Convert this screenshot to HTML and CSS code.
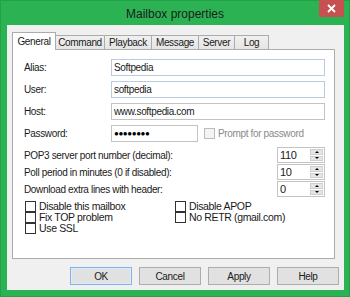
FILE: index.html
```html
<!DOCTYPE html>
<html lang="en">
<head>
    <meta charset="UTF-8">
    <title>Mailbox properties</title>
    <link rel="stylesheet" href="styles.css">
</head>
<body>
    <!-- 대화상자 창 -->
    <div class="win">
        <!-- 1. 타이틀바 -->
        <div class="tbar">
            <span></span>
            <h1 class="ttl">Mailbox properties</h1>
            <a href="" class="xbtn">
                <svg width="9" height="9" viewBox="0 0 9 9">
                    <path d="M1 1L8 8M8 1L1 8" stroke="#fff" stroke-width="1.8"/>
                </svg>
            </a>
        </div>

        <!-- 2. 본문 -->
        <div class="cont">
            <!-- 탭 -->
            <ul class="tabs">
                <li class="on">General</li>
                <li>Command</li>
                <li>Playback</li>
                <li>Message</li>
                <li>Server</li>
                <li>Log</li>
            </ul>

            <!-- 탭 패널 -->
            <div class="panel">
                <div class="row">
                    <label class="lb">Alias:</label>
                    <div class="inp blu">Softpedia</div>
                </div>
                <div class="row">
                    <label class="lb">User:</label>
                    <div class="inp blu">softpedia</div>
                </div>
                <div class="row">
                    <label class="lb">Host:</label>
                    <div class="inp">www.softpedia.com</div>
                </div>
                <div class="row">
                    <label class="lb">Password:</label>
                    <div class="inp pw">●●●●●●●●</div>
                    <span class="chk dis"></span>
                    <span class="gry">Prompt for password</span>
                </div>

                <div class="srow first">
                    <label>POP3 server port number (decimal):</label>
                    <div class="spin"><span class="val">110</span><span class="arr"><i class="up"></i><i class="dn"></i></span></div>
                </div>
                <div class="srow">
                    <label>Poll period in minutes (0 if disabled):</label>
                    <div class="spin"><span class="val">10</span><span class="arr"><i class="up"></i><i class="dn"></i></span></div>
                </div>
                <div class="srow">
                    <label>Download extra lines with header:</label>
                    <div class="spin"><span class="val">0</span><span class="arr"><i class="up"></i><i class="dn"></i></span></div>
                </div>

                <!-- 체크박스 -->
                <div class="opts">
                    <div class="opt"><span class="chk"></span>Disable this mailbox</div>
                    <div class="opt"><span class="chk"></span>Disable APOP</div>
                    <div class="opt"><span class="chk"></span>Fix TOP problem</div>
                    <div class="opt"><span class="chk"></span>No RETR (gmail.com)</div>
                    <div class="opt"><span class="chk"></span>Use SSL</div>
                </div>
            </div>

            <!-- 하단 버튼 -->
            <div class="btns">
                <button class="btn def">OK</button>
                <button class="btn">Cancel</button>
                <button class="btn">Apply</button>
                <button class="btn">Help</button>
            </div>
        </div>
    </div>
</body>
</html>
```

FILE: styles.css
```css
html,
body {
    margin: 0;
    padding: 0;
}

body {
    font-family: "Liberation Sans", Arial, sans-serif;
    font-size: 10px;
    letter-spacing: -0.35px;
    color: #1a1a1a;
}

/* 창 */
.win {
    width: 350px;
    height: 297px;
    box-sizing: border-box;
    background: #2bb353;
    border: 1px solid #24a048;
    display: flex;
    flex-direction: column;
}

/* 1. 타이틀바 */
.tbar {
    height: 24px;
    display: grid;
    grid-template-columns: 1fr auto 1fr;
    align-items: start;
}

.ttl {
    margin: 6px 0 0;
    font-size: 12px;
    font-weight: normal;
    letter-spacing: 0;
    color: #1c1c1c;
}

.xbtn {
    justify-self: end;
    margin-right: 5px;
    margin-top: -1px;
    width: 25px;
    height: 17px;
    background: #c75050;
    display: flex;
    align-items: center;
    justify-content: center;
}

/* 2. 본문 */
.cont {
    flex: 1;
    margin: 0 5px 6px 6px;
    background: #f0f0f0;
    padding: 7px 7px 0 5px;
    display: flex;
    flex-direction: column;
}

/* 탭 */
.tabs {
    list-style: none;
    margin: 0;
    padding: 0;
    display: flex;
    align-items: flex-end;
    height: 17px;
    position: relative;
    z-index: 1;
}

.tabs li {
    height: 14px;
    line-height: 14px;
    box-sizing: border-box;
    border: 1px solid #acacac;
    border-bottom: 0;
    margin-left: -1px;
    background: linear-gradient(#f0f0f0, #e5e5e5);
    text-align: center;
}

.tabs li:nth-child(1) { width: 44px; margin-left: 0; }
.tabs li:nth-child(2) { width: 50px; }
.tabs li:nth-child(3) { width: 48px; }
.tabs li:nth-child(4) { width: 48px; }
.tabs li:nth-child(5) { width: 37px; }
.tabs li:nth-child(6) { width: 35px; }

.tabs li.on {
    line-height: 17px;
    background: #fff;
    margin-bottom: -1px;
    height: 18px;
}

.panel {
    width: 323px;
    height: 210px;
    box-sizing: border-box;
    background: #fff;
    border: 1px solid #acacac;
    padding: 9px 9px 0 11px;
}

/* 입력 줄 */
.row {
    display: flex;
    align-items: center;
    height: 17px;
    margin-bottom: 5px;
}

.lb {
    width: 87px;
}

.inp {
    flex: 1;
    height: 17px;
    box-sizing: border-box;
    border: 1px solid #c3c3c3;
    padding-left: 2px;
    line-height: 15px;
}

.inp.blu {
    border-color: #b9cbe3;
}

.inp.pw {
    flex: none;
    width: 87px;
    font-size: 8px;
    letter-spacing: -0.4px;
    padding-left: 2px;
    color: #000;
}

.gry {
    color: #8a8a8a;
    margin-left: 3px;
}

/* 체크박스 */
.chk {
    display: inline-block;
    width: 9px;
    height: 9px;
    border: 1px solid #333;
    background: #fff;
    flex: none;
}

.chk.dis {
    border-color: #bcbcbc;
    background: #f4f4f4;
    margin-left: 6px;
}

/* 스핀 줄 */
.srow {
    display: flex;
    align-items: center;
    justify-content: space-between;
    height: 16px;
    margin-bottom: 1px;
}

.srow.first {
    margin-top: 2px;
}

.spin {
    width: 48px;
    height: 16px;
    box-sizing: border-box;
    border: 1px solid #c3c3c3;
    display: flex;
}

.val {
    flex: 1;
    padding-left: 2px;
    line-height: 14px;
    font-size: 11px;
}

.arr {
    width: 13px;
    display: flex;
    flex-direction: column;
    padding: 1px 1px 1px 0;
    gap: 1px;
}

.arr i {
    flex: 1;
    background: #e6e6e6;
    border: 1px solid #cfcfcf;
    display: flex;
    align-items: center;
    justify-content: center;
}

.arr i::before {
    content: "";
    border-left: 2px solid transparent;
    border-right: 2px solid transparent;
}

.arr .up::before {
    border-bottom: 2px solid #000;
}

.arr .dn::before {
    border-top: 2px solid #000;
}

/* 옵션 */
.opts {
    margin-top: 4px;
    padding-left: 1px;
    display: grid;
    grid-template-columns: 150px 1fr;
    grid-auto-rows: 11px;
}

.opt {
    display: flex;
    align-items: center;
    gap: 3px;
    line-height: 11px;
    font-size: 10.5px;
}

/* 하단 버튼 */
.btns {
    display: flex;
    justify-content: flex-end;
    gap: 7px;
    margin-top: 8px;
    margin-right: -2px;
}

.btn {
    width: 62px;
    height: 18px;
    padding: 0;
    font-family: inherit;
    font-size: 10px;
    letter-spacing: -0.35px;
    background: #e1e1e1;
    border: 1px solid #adadad;
    color: #1a1a1a;
}

.btn.def {
    border-color: #7eb4ea;
    box-shadow: inset 0 0 0 1px #dcecfc;
}
```
